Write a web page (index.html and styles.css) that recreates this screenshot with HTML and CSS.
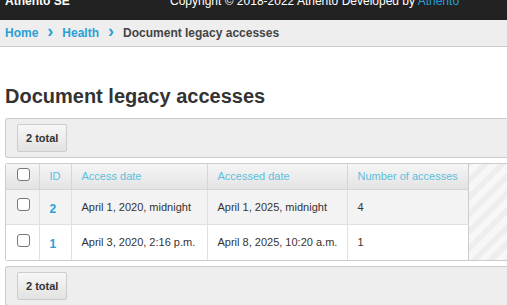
FILE: index.html
```html
<!DOCTYPE html>
<html lang="en">
<head>
    <meta charset="UTF-8">
    <title>Document legacy accesses</title>
    <link rel="stylesheet" href="styles.css">
</head>
<body>
    <header class="topbar">
        <div class="topbar-inner">
            <span class="brand">Athento SE</span>
            <span class="copyright">Copyright &copy; 2018-2022 Athento Developed by <a href="#">Athento</a></span>
        </div>
    </header>
    <div class="breadcrumbs">
        <a href="#">Home</a>
        <span class="sep">&rsaquo;</span>
        <a href="#">Health</a>
        <span class="sep">&rsaquo;</span>
        <span class="current">Document legacy accesses</span>
    </div>
    <main class="content">
        <h1>Document legacy accesses</h1>
        <div class="toolbar">
            <span class="btn">2 total</span>
        </div>
        <div class="results">
            <table>
                <colgroup>
                    <col class="col-check">
                    <col class="col-id">
                    <col class="col-access">
                    <col class="col-accessed">
                    <col class="col-count">
                </colgroup>
                <thead>
                    <tr>
                        <th class="check"><span class="checkbox"></span></th>
                        <th>ID</th>
                        <th>Access date</th>
                        <th>Accessed date</th>
                        <th>Number of accesses</th>
                    </tr>
                </thead>
                <tbody>
                    <tr class="row1">
                        <td class="check"><span class="checkbox"></span></td>
                        <td class="id"><a href="#">2</a></td>
                        <td>April 1, 2020, midnight</td>
                        <td>April 1, 2025, midnight</td>
                        <td>4</td>
                    </tr>
                    <tr class="row2">
                        <td class="check"><span class="checkbox"></span></td>
                        <td class="id"><a href="#">1</a></td>
                        <td>April 3, 2020, 2:16 p.m.</td>
                        <td>April 8, 2025, 10:20 a.m.</td>
                        <td>1</td>
                    </tr>
                </tbody>
            </table>
        </div>
        <div class="toolbar">
            <span class="btn">2 total</span>
        </div>
    </main>
</body>
</html>
```

FILE: styles.css
```css
* {
    margin: 0;
    padding: 0;
    box-sizing: border-box;
}

body {
    font-family: "Liberation Sans", Arial, sans-serif;
    background-color: #fff;
    color: #333;
    overflow: hidden;
}

a {
    color: #2a9fd6;
    text-decoration: none;
}

.topbar {
    background-color: #222;
    height: 20px;
    overflow: hidden;
}

.topbar-inner {
    display: flex;
    align-items: center;
    height: 20px;
    margin-top: -9px;
    padding: 0 5px;
    font-size: 12px;
    color: #fff;
}

.brand {
    font-weight: bold;
    width: 165px;
}

.breadcrumbs {
    background-color: #eee;
    border-bottom: 1px solid #ccc;
    height: 27px;
    padding: 0 5px;
    display: flex;
    align-items: center;
    gap: 9px;
    font-size: 12px;
    font-weight: bold;
}

.breadcrumbs .sep {
    color: #2a9fd6;
    font-size: 18px;
    font-weight: bold;
    margin-top: -3px;
}

.breadcrumbs .current {
    color: #444;
}

.content {
    padding: 37px 0 0 5px;
}

h1 {
    font-size: 20px;
    color: #333;
    line-height: 24px;
    margin-bottom: 10px;
}

.toolbar {
    background-color: #eee;
    border: 1px solid #ccc;
    border-right: none;
    border-radius: 3px 0 0 3px;
    height: 40px;
    padding: 0 11px;
    display: flex;
    align-items: center;
}

.btn {
    display: inline-block;
    height: 28px;
    line-height: 26px;
    padding: 0 8px;
    border: 1px solid #ccc;
    border-radius: 2px;
    background: linear-gradient(#f7f7f7, #e2e2e2);
    font-size: 11px;
    font-weight: bold;
    color: #333;
}

.results {
    margin: 5px 0;
    border: 1px solid #ccc;
    border-right: none;
    border-radius: 3px 0 0 3px;
    background: repeating-linear-gradient(135deg, #eee 0 6px, #f7f7f7 6px 12px);
}

table {
    table-layout: fixed;
    width: 462px;
    border-collapse: collapse;
    background-color: #fff;
    font-size: 11px;
}

.col-check {
    width: 33px;
}

.col-id {
    width: 32px;
}

.col-access {
    width: 136px;
}

.col-accessed {
    width: 140px;
}

.col-count {
    width: 121px;
}

th {
    height: 25px;
    font-weight: normal;
    text-align: left;
    white-space: nowrap;
    color: #5bc0de;
    background: linear-gradient(#f5f5f5, #e3e3e3);
    border-bottom: 1px solid #d5d5d5;
    border-right: 1px solid #d5d5d5;
    padding: 0 10px;
}

td {
    height: 35px;
    padding: 0 10px;
    white-space: nowrap;
    border-right: 1px solid #e0e0e0;
    border-bottom: 1px solid #e0e0e0;
}

tr.row1 td {
    background-color: #f3f3f3;
}

tr.row2 td {
    height: 36px;
    border-bottom: none;
}

th:last-child, td:last-child {
    border-right: 1px solid #ccc;
}

.check {
    padding: 0 0 0 11px;
}

td.id {
    font-size: 12px;
    font-weight: bold;
    padding-top: 4px;
}

.checkbox {
    display: block;
    width: 13px;
    height: 13px;
    border: 1px solid #777;
    border-radius: 3px;
    background-color: #fff;
    margin-top: -4px;
}
```
